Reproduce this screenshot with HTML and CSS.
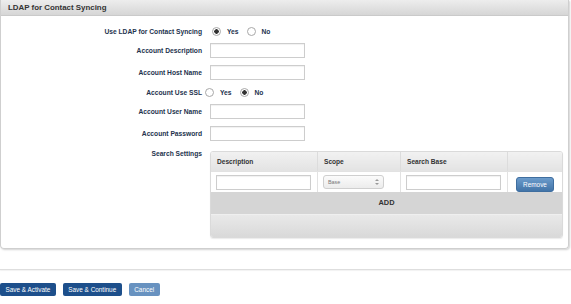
FILE: index.html
```html
<!DOCTYPE html>
<html lang="en">
<head>
  <meta charset="UTF-8" />
  <title>LDAP for Contact Syncing</title>
  <link rel="stylesheet" href="styles.css">
</head>
<body>
  <div class="panel">
    <div class="panel-head">LDAP for Contact Syncing</div>
    <div class="panel-body">

      <div class="row row-radio">
        <label class="lbl">Use LDAP for Contact Syncing</label>
        <div class="opts">
          <label class="opt"><input type="radio" name="useLdap" checked> Yes</label>
          <label class="opt"><input type="radio" name="useLdap"> No</label>
        </div>
      </div>

      <div class="row">
        <label class="lbl">Account Description</label>
        <input class="txt" type="text">
      </div>

      <div class="row">
        <label class="lbl">Account Host Name</label>
        <input class="txt" type="text">
      </div>

      <div class="row row-radio row-ssl">
        <label class="lbl">Account Use SSL</label>
        <div class="opts">
          <label class="opt"><input type="radio" name="useSsl"> Yes</label>
          <label class="opt"><input type="radio" name="useSsl" checked> No</label>
        </div>
      </div>

      <div class="row">
        <label class="lbl">Account User Name</label>
        <input class="txt" type="text">
      </div>

      <div class="row">
        <label class="lbl">Account Password</label>
        <input class="txt" type="password">
      </div>

      <!-- search settings grid -->
      <div class="row row-grid">
        <label class="lbl">Search Settings</label>
        <div class="grid-box">
          <table class="grid">
            <tr>
              <th class="c-desc">Description</th>
              <th class="c-scope">Scope</th>
              <th class="c-base">Search Base</th>
              <th class="c-act"></th>
            </tr>
            <tr>
              <td><input class="txt cell-txt" type="text"></td>
              <td>
                <div class="sel">
                  <span>Base</span>
                  <span class="sel-arrows"></span>
                </div>
              </td>
              <td><input class="txt cell-txt" type="text"></td>
              <td class="c-act"><button class="btn-remove">Remove</button></td>
            </tr>
          </table>
          <div class="grid-add">ADD</div>
          <div class="grid-foot"></div>
        </div>
      </div>

    </div>
  </div>

  <div class="divider"></div>

  <div class="actions">
    <button class="btn">Save &amp; Activate</button>
    <button class="btn">Save &amp; Continue</button>
    <button class="btn btn-light">Cancel</button>
  </div>
</body>
</html>
```

FILE: styles.css
```css
/* Global */
body {
  margin: 0;
  font-family: "Liberation Sans", Arial, sans-serif;
  background: #fff;
  color: #333;
}

/* Panel */
.panel {
  width: 567px;
  border: 1px solid #cfcfcf;
  border-top: none;
  border-radius: 0 0 4px 4px;
  box-shadow: 1px 1px 2px rgba(0, 0, 0, 0.18);
}
.panel-head {
  height: 16px;
  line-height: 16px;
  padding-left: 7px;
  font-size: 7.9px;
  font-weight: bold;
  color: #333;
  background: linear-gradient(#ededed, #d6d6d6);
  border-bottom: 1px solid #cacaca;
  box-sizing: border-box;
}
.panel-body {
  padding: 8px 5px 10px 0;
}

/* Form rows */
.row {
  display: flex;
  align-items: center;
  height: 22px;
}
.row-radio {
  height: 15px;
}
.row-ssl {
  margin-top: 2px;
}
.lbl {
  width: 201px;
  flex: none;
  text-align: right;
  font-size: 6.7px;
  font-weight: bold;
  color: #23324d;
  margin-right: 8px;
}

.txt {
  width: 95px;
  height: 15px;
  box-sizing: border-box;
  margin: 0;
  border: 1px solid #cdcdcd;
  box-shadow: inset 0 1px 1px rgba(0, 0, 0, 0.06);
  font-size: 7px;
}

/* Radios */
.opts {
  display: flex;
  align-items: center;
  margin-left: 2px;
}
.row-ssl .opts {
  margin-left: -5px;
}
.opt {
  display: flex;
  align-items: center;
  font-size: 6.7px;
  font-weight: bold;
  color: #23324d;
  margin-right: 8px;
}
.opt input {
  appearance: none;
  width: 9px;
  height: 9px;
  margin: 0 6px 0 0;
  border: 1px solid #a8a8a8;
  border-radius: 50%;
  background: #fff;
  box-sizing: border-box;
}
.opt input:checked {
  background: radial-gradient(circle, #333 0, #333 2px, #fff 2.5px);
}

/* Search settings grid */
.row-grid {
  height: auto;
  align-items: flex-start;
  margin-top: 7px;
}
.row-grid .lbl {
  margin-top: -1px;
}
.grid-box {
  width: 353px;
  border: 1px solid #dadada;
  border-radius: 3px;
  overflow: hidden;
  box-shadow: 0 1px 1px rgba(0, 0, 0, 0.08);
}
.grid {
  width: 100%;
  border-collapse: collapse;
}
.grid th {
  height: 19px;
  padding: 0 6px;
  text-align: left;
  font-size: 6.6px;
  font-weight: bold;
  color: #333;
  background: linear-gradient(#f1f1f1, #e3e3e3);
  border-left: 1px solid #dcdcdc;
  border-bottom: 1px solid #e2e2e2;
}
.grid td {
  height: 20px;
  padding: 0 5px;
  border-left: 1px solid #e2e2e2;
}
.grid th:first-child,
.grid td:first-child {
  border-left: none;
}
.c-desc { width: 94px; }
.c-scope { width: 70px; }
.c-base { width: 94px; }
.c-act { text-align: center; }

.cell-txt {
  display: block;
}

.sel {
  width: 61px;
  height: 14px;
  box-sizing: border-box;
  border: 1px solid #cfcfcf;
  border-radius: 3px;
  background: linear-gradient(#fbfbfb, #ececec);
  display: flex;
  align-items: center;
  justify-content: space-between;
  padding: 0 4px;
  font-size: 5.4px;
  color: #777;
}
.sel-arrows {
  position: relative;
  width: 4px;
  height: 6px;
}
.sel-arrows::before,
.sel-arrows::after {
  content: "";
  position: absolute;
  left: 0;
  border-left: 2px solid transparent;
  border-right: 2px solid transparent;
}
.sel-arrows::before {
  top: 0;
  border-bottom: 2px solid #999;
}
.sel-arrows::after {
  bottom: 0;
  border-top: 2px solid #999;
}

.btn-remove {
  width: 38px;
  height: 15px;
  padding: 0;
  border: 1px solid #3f6e9f;
  border-radius: 3px;
  background: linear-gradient(#6b9bcb, #4274a8);
  color: #fff;
  font-family: "Liberation Sans", Arial, sans-serif;
  font-size: 6.4px;
}

.grid-add {
  height: 22px;
  line-height: 22px;
  text-align: center;
  font-size: 7.4px;
  font-weight: bold;
  color: #333;
  background: #d5d5d5;
}
.grid-foot {
  height: 23px;
  background: linear-gradient(#e9e9e9, #d9d9d9);
  border-top: 1px solid #efefef;
  box-sizing: border-box;
}

/* Divider and bottom buttons */
.divider {
  margin-top: 20px;
  height: 1px;
  background: #dedede;
  box-shadow: 0 1px 1px rgba(0, 0, 0, 0.06);
}
.actions {
  display: flex;
  gap: 7px;
  margin-top: 13px;
}
.btn {
  height: 13px;
  padding: 0 5.5px;
  border: none;
  border-radius: 2px;
  background: #1d4f8b;
  color: #fff;
  font-family: "Liberation Sans", Arial, sans-serif;
  font-size: 6.4px;
}
.btn-light {
  background: #6892c0;
}
```
